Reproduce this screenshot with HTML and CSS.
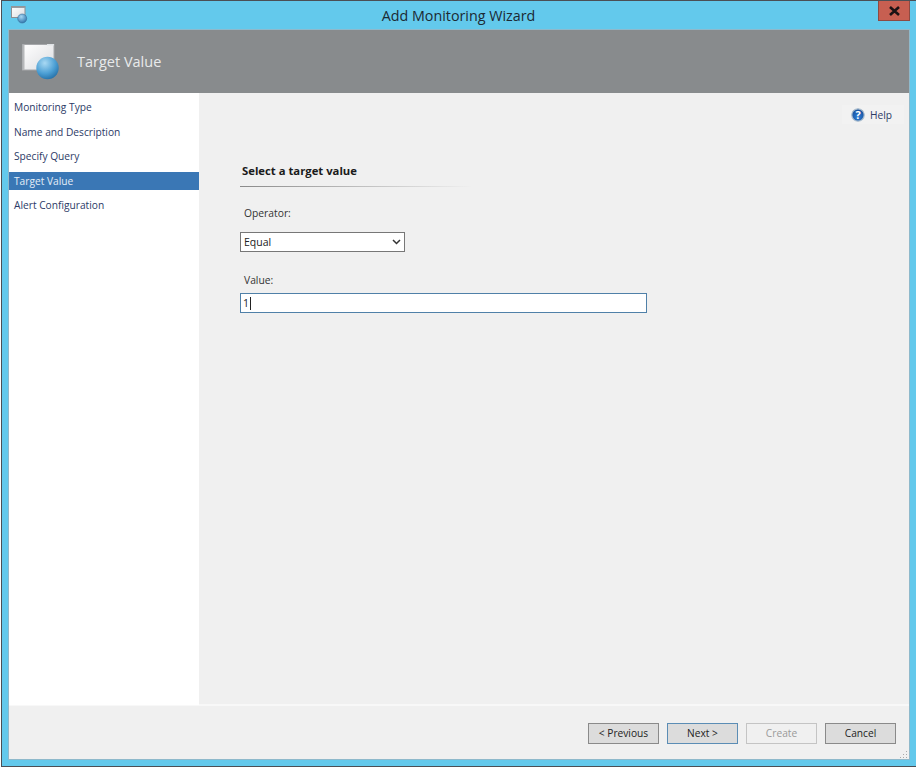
FILE: index.html
```html
<!DOCTYPE html>
<html lang="en">
<head>
<meta charset="utf-8">
<title>Add Monitoring Wizard</title>
<link rel="stylesheet" href="styles.css">
</head>
<body>
<div class="window">
  <div class="titlebar">
    <svg class="title-icon" width="17" height="18" viewBox="0 0 17 18">
      <defs>
        <radialGradient id="ballA" cx="40%" cy="30%" r="75%"><stop offset="0" stop-color="#a6d6f2"/><stop offset="1" stop-color="#2a74ad"/></radialGradient>
        <linearGradient id="paneA" x1="0" y1="0" x2="1" y2="1"><stop offset="0" stop-color="#ffffff"/><stop offset="1" stop-color="#dcdde0"/></linearGradient>
      </defs>
      <rect x=".5" y=".5" width="13.500" height="11" fill="url(#paneA)" stroke="#8d8f92"/>
      <rect x=".5" y=".5" width="13.500" height="1.500" fill="#9a9c9f"/>
      <circle cx="11.200" cy="12.500" r="4.500" fill="url(#ballA)" stroke="#3a6f98" stroke-width=".6"/>
    </svg>
    <div class="title">Add Monitoring Wizard</div>
    <div class="close"><svg width="13" height="10" viewBox="0 0 13 10"><path d="M2 1 L11 9 M11 1 L2 9" stroke="#1a1214" stroke-width="2.600" fill="none"/></svg></div>
  </div>
  <div class="client">
    <header class="banner">
      <svg class="banner-icon" width="38" height="38" viewBox="0 0 38 38">
        <defs>
          <radialGradient id="ballB" cx="38%" cy="28%" r="78%"><stop offset="0" stop-color="#a9d9f3"/><stop offset=".6" stop-color="#4c9fd4"/><stop offset="1" stop-color="#236ea6"/></radialGradient>
          <linearGradient id="paneB" x1="0" y1="0" x2="1" y2="1"><stop offset="0" stop-color="#ffffff"/><stop offset="1" stop-color="#dcdde0"/></linearGradient>
        </defs>
        <rect x=".5" y=".5" width="31.500" height="25.500" fill="url(#paneB)" stroke="#a5a7aa"/>
        <rect x=".5" y=".5" width="2" height="25.500" fill="#b6b8ba"/>
        <rect x="25" y="0" width="7" height="1.500" fill="#dfe3e6"/>
        <circle cx="25.500" cy="24" r="11.200" fill="url(#ballB)"/>
      </svg>
      <div class="banner-title">Target Value</div>
    </header>
    <div class="middle">
      <nav class="sidebar">
        <div class="step">Monitoring Type</div>
        <div class="step">Name and Description</div>
        <div class="step">Specify Query</div>
        <div class="step step-active">Target Value</div>
        <div class="step">Alert Configuration</div>
      </nav>
      <main class="content">
        <div class="help">
          <svg width="14" height="14" viewBox="0 0 14 14">
            <defs><radialGradient id="ballC" cx="50%" cy="65%" r="60%"><stop offset="0" stop-color="#2f7fd6"/><stop offset="1" stop-color="#174f9c"/></radialGradient></defs>
            <circle cx="7" cy="7" r="6.200" fill="url(#ballC)" stroke="#a9bccd" stroke-width="1.200"/>
            <text x="7" y="10.500" class="help-q">?</text>
          </svg>
          <span class="help-text">Help</span>
        </div>
        <h2 class="section-title">Select a target value</h2>
        <div class="rule"></div>
        <div class="label label-op">Operator:</div>
        <div class="combo"><span>Equal</span>
          <svg width="9" height="6" viewBox="0 0 9 6"><path d="M1 1 L4.500 4.500 L8 1" stroke="#333" stroke-width="1.500" fill="none"/></svg>
        </div>
        <div class="label label-val">Value:</div>
        <div class="textbox"><span>1</span><span class="caret"></span></div>
      </main>
    </div>
    <footer class="footer">
      <div class="btn">&lt; Previous</div>
      <div class="btn btn-default">Next &gt;</div>
      <div class="btn btn-disabled">Create</div>
      <div class="btn">Cancel</div>
      <svg class="grip" width="9" height="9" viewBox="0 0 9 9"><path d="M7 1h1v1H7zM7 4h1v1H7zM4 4h1v1H4zM7 7h1v1H7zM4 7h1v1H4zM1 7h1v1H1z" fill="#a9a9a9"/></svg>
    </footer>
  </div>
</div>
</body>
</html>
```
FILE: styles.css
```css
* { box-sizing: border-box; }
html, body { margin: 0; height: 100%; background: #fff; overflow: hidden; }
body { font-family: "Open Sans", "Liberation Sans", sans-serif; font-size: 11px; color: #222; }
.window {
  width: 915px; height: 767px;
  margin-left: 1px;
  background: #63c9ec;
  border: 1px solid #4b4f55;
  border-right: 0;
  display: flex; flex-direction: column;
}
.titlebar { height: 29px; flex: none; display: flex; align-items: flex-start; position: relative; padding-left: 9px; }
.title-icon { margin-top: 5px; }
.title { position: absolute; left: 0; width: 913px; top: 5px; text-align: center; font-size: 14.300px; line-height: 20px; color: #1c2a33; }
.close {
  position: absolute; left: 876px; top: 0; width: 32px; height: 20px;
  background: #c75f51; border: 1px solid #8e4a42; border-top: 0;
  display: flex; align-items: center; justify-content: center;
}
.client { flex: none; width: 900px; height: 729px; margin-left: 7px; display: flex; flex-direction: column; background: #f0f0f0; box-shadow: 0 0 0 1px #8fb9cb; }
.banner { height: 63px; flex: none; background: #888b8d; display: flex; align-items: center; padding-left: 13px; }
.banner-icon { margin-top: 3px; }
.banner-title { margin-left: 17px; font-size: 14.500px; color: #e8eaeb; padding-bottom: 1px; }
.middle { flex: 1; display: flex; min-height: 0; }
.sidebar { width: 190px; flex: none; background: #fff; padding-top: 2px; }
.step { height: 24.500px; line-height: 24px; padding-left: 5px; color: #2c3a66; font-size: 10.200px; }
.step-active { height: 18.500px; line-height: 18px; margin: 3px 0 3px; background: #3a77b5; color: #e4eef7; }
.content { flex: 1; position: relative; padding: 70px 0 0 41px; border-bottom: 1px solid #f8f8f8; }
.help { position: absolute; left: 643px; top: 12px; width: 62px; height: 19px; padding-left: 9px; background: #f2f2f2; display: flex; align-items: center; gap: 5px; }
.help-q { font-size: 11px; font-weight: 700; fill: #fff; text-anchor: middle; }
.help-text { color: #2c3a66; font-size: 10.200px; }
.section-title { margin: 0; padding-left: 2px; font-size: 11.300px; line-height: 16px; font-weight: 700; color: #1b1b1b; }
.rule { height: 1px; width: 232px; margin-top: 7px; background: linear-gradient(to right, #8a8a8a, #f0f0f0); }
.label { padding-left: 4px; font-size: 10.300px; line-height: 16px; color: #333; }
.label-op { margin-top: 18px; }
.label-val { margin-top: 20px; }
.combo {
  width: 165px; height: 20px; margin-top: 11px;
  background: #fff; border: 1px solid #777;
  display: flex; align-items: center; justify-content: space-between;
  padding: 0 3px 0 3px; font-size: 10.500px; color: #222;
}
.textbox {
  width: 407px; height: 20px; margin-top: 5px;
  background: #fff; border: 1px solid #4f80a8;
  display: flex; align-items: center; padding-left: 2px; font-size: 10.500px; color: #222;
}
.caret { width: 1px; height: 13px; background: #222; margin-left: 1px; }
.footer { height: 54px; flex: none; display: flex; align-items: flex-start; padding: 17px 0 0 579px; gap: 8px; position: relative; border-top: 1px solid #f8f8f8; }
.btn {
  width: 71px; height: 21px; padding-bottom: 2px; background: #dcdcdc; border: 1px solid #8a8a8a;
  display: flex; align-items: center; justify-content: center; font-size: 10.200px; color: #222;
}
.btn-default { border-color: #5b8db5; }
.btn-disabled { background: #f0f0f0; border-color: #c4c4c4; color: #9a9a9a; }
.grip { position: absolute; right: 1px; bottom: 0; }
```
